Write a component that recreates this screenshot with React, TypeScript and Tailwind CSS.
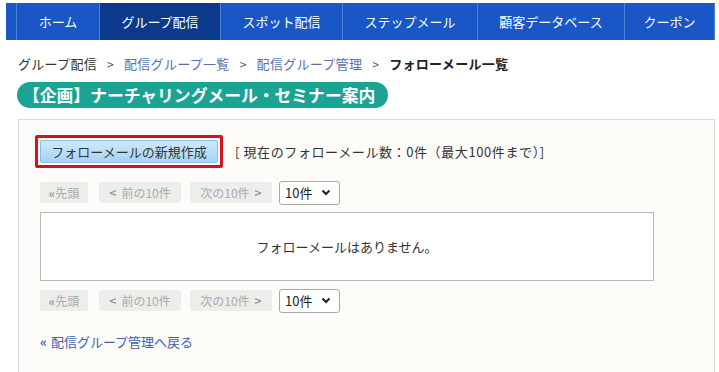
import React from "react";

const navItems = [
  { label: "ホーム", w: 83 },
  { label: "グループ配信", w: 121, active: true },
  { label: "スポット配信", w: 122 },
  { label: "ステップメール", w: 135 },
  { label: "顧客データベース", w: 147 },
  { label: "クーポン", w: 90 },
];

function Pager() {
  return (
    <div className="flex items-center h-[23px]">
      <span className="flex items-center justify-center w-[48px] h-[21px] bg-[#ededeb] text-[#ababab] text-[12px] rounded-[2px]">
        <span className="font-bold text-[#9a9a9a]">«</span>先頭
      </span>
      <span className="flex items-center justify-center ml-[11px] w-[82px] h-[21px] bg-[#ededeb] text-[#ababab] text-[12px] rounded-[2px]">
        <span className="font-bold text-[#9a9a9a] mr-[5px]">&lt;</span>前の10件
      </span>
      <span className="flex items-center justify-center ml-[9px] w-[82px] h-[21px] bg-[#ededeb] text-[#ababab] text-[12px] rounded-[2px]">
        次の10件<span className="font-bold text-[#9a9a9a] ml-[5px]">&gt;</span>
      </span>
      <span className="flex items-center ml-[7px] w-[61px] h-[24px] bg-white border border-[#a9a9a9] rounded-[3px] pl-[5px] text-[13px] text-[#222]">
        10件
        <svg className="ml-[9px]" width="10" height="7" viewBox="0 0 10 7">
          <path d="M1.5 1.5 L5 5 L8.5 1.5" stroke="#222" strokeWidth="2" fill="none" />
        </svg>
      </span>
    </div>
  );
}

export default function App() {
  return (
    <div
      className="w-[719px] h-[372px] bg-white overflow-hidden"
      style={{ fontFamily: '"Noto Sans CJK JP", "Noto Sans", sans-serif' }}
    >
      <nav className="mt-[3px] ml-[6px] mr-[4px] h-[37px] flex bg-[#1a57c6]">
        <div className="w-[11px] border-r border-[#4b82d8]" />
        {navItems.map((it) => (
          <div
            key={it.label}
            style={{ width: it.w }}
            className={`flex items-center justify-center text-[13px] border-r border-[#4b82d8] ${
              it.active ? "bg-[#0b3a8d] text-white" : "text-white"
            }`}
          >
            {it.label}
          </div>
        ))}
        <div className="flex-1" />
      </nav>

      <div className="ml-[18px] mt-[15px] h-[18px] flex items-center text-[13px] text-[#333] tracking-[0.3px]">
        <span>グループ配信</span>
        <span className="mx-[10px] text-[#555] text-[12px]">&gt;</span>
        <span className="text-[#5671ad]">配信グループ一覧</span>
        <span className="mx-[10px] text-[#555] text-[12px]">&gt;</span>
        <span className="text-[#5671ad]">配信グループ管理</span>
        <span className="mx-[10px] text-[#555] text-[12px]">&gt;</span>
        <span className="font-bold text-[#222]">フォローメール一覧</span>
      </div>

      <div className="ml-[17px] mt-[9px] w-[371px] h-[26px] rounded-full bg-[#1ba394] flex items-center pl-[6px] text-white font-bold text-[16.8px] leading-none">
        【企画】ナーチャリングメール・セミナー案内
      </div>

      <div className="ml-[18px] mr-[4px] mt-[11px] h-[260px] border border-[#dcdcd8] bg-[#fdfcf8] pl-[16px] pt-[15px]">
        <div className="flex items-center h-[33px]">
          <span className="border-[3px] border-[#d3141e] p-[2px] rounded-[2px]">
            <span className="flex items-center justify-center w-[178px] h-[23px] bg-gradient-to-b from-[#cfe9fb] to-[#a6d3f2] border border-[#8dbde0] text-[13px] text-[#333] rounded-[2px]">
              フォローメールの新規作成
            </span>
          </span>
          <span className="ml-[12px] text-[13px] text-[#333] tracking-[0.6px]">
            [ 現在のフォローメール数：0件（最大100件まで）]
          </span>
        </div>

        <div className="ml-[5px] mt-[13px]">
          <Pager />
        </div>

        <div className="ml-[5px] mt-[8px] w-[614px] h-[69px] bg-white border border-[#b9b9b9] flex items-center justify-center text-[13px] text-[#333]">
          フォローメールはありません。
        </div>

        <div className="ml-[5px] mt-[8px]">
          <Pager />
        </div>

        <div className="ml-[5px] mt-[20px] flex items-center text-[13px] text-[#3d62ae]">
          <span className="font-bold mr-[4px]">«</span>
          配信グループ管理へ戻る
        </div>
      </div>
    </div>
  );
}
